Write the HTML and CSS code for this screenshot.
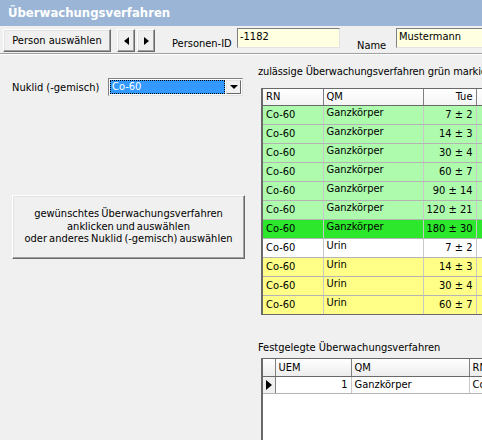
FILE: index.html
```html
<!DOCTYPE html>
<html lang="de">
<head>
<meta charset="utf-8">
<title>Überwachungsverfahren</title>
<link rel="stylesheet" href="styles.css">
</head>
<body>
<div class="titlebar">Überwachungsverfahren</div>
<div class="toolbar">
  <div class="btn btn-person">Person auswählen</div>
  <div class="nav">
    <div class="btn btn-nav"><span class="tri tri-left"></span></div>
    <div class="btn btn-nav"><span class="tri tri-right"></span></div>
  </div>
  <div class="lbl lbl-id">Personen-ID</div>
  <div class="field field-id">-1182</div>
  <div class="lbl lbl-name">Name</div>
  <div class="field field-name">Mustermann</div>
</div>
<div class="main">
  <div class="left">
    <div class="nuk">
      <span class="nuk-label">Nuklid (-gemisch)</span>
      <div class="combo">
        <div class="combo-val"><span>Co-60</span></div>
        <div class="combo-btn"><span class="tri tri-down"></span></div>
      </div>
    </div>
    <div class="btn btn-big">gewünschtes Überwachungsverfahren<br>anklicken und auswählen<br>oder anderes Nuklid (-gemisch) auswählen</div>
  </div>
  <div class="right">
    <div class="cap cap1">zulässige Überwachungsverfahren grün markiert</div>
    <div class="grid grid1">
      <table>
        <colgroup><col class="c-rn"><col class="c-qm"><col class="c-tue"><col class="c-x"></colgroup>
        <thead><tr><th>RN</th><th>QM</th><th class="r">Tue</th><th></th></tr></thead>
        <tbody>
          <tr class="g"><td>Co-60</td><td>Ganzkörper</td><td class="r">7 ± 2</td><td></td></tr>
          <tr class="g"><td>Co-60</td><td>Ganzkörper</td><td class="r">14 ± 3</td><td></td></tr>
          <tr class="g"><td>Co-60</td><td>Ganzkörper</td><td class="r">30 ± 4</td><td></td></tr>
          <tr class="g"><td>Co-60</td><td>Ganzkörper</td><td class="r">60 ± 7</td><td></td></tr>
          <tr class="g"><td>Co-60</td><td>Ganzkörper</td><td class="r">90 ± 14</td><td></td></tr>
          <tr class="g"><td>Co-60</td><td>Ganzkörper</td><td class="r">120 ± 21</td><td></td></tr>
          <tr class="gg"><td>Co-60</td><td>Ganzkörper</td><td class="r">180 ± 30</td><td></td></tr>
          <tr class="w"><td>Co-60</td><td>Urin</td><td class="r">7 ± 2</td><td></td></tr>
          <tr class="y"><td>Co-60</td><td>Urin</td><td class="r">14 ± 3</td><td></td></tr>
          <tr class="y"><td>Co-60</td><td>Urin</td><td class="r">30 ± 4</td><td></td></tr>
          <tr class="y"><td>Co-60</td><td>Urin</td><td class="r">60 ± 7</td><td></td></tr>
        </tbody>
      </table>
    </div>
    <div class="cap cap2">Festgelegte Überwachungsverfahren</div>
    <div class="grid grid2">
      <table>
        <colgroup><col class="c-sel"><col class="c-uem"><col class="c-qm2"><col class="c-rn2"></colgroup>
        <thead><tr><th></th><th>UEM</th><th>QM</th><th>RN</th></tr></thead>
        <tbody>
          <tr><td class="sel"><span class="tri tri-right"></span></td><td class="r">1</td><td>Ganzkörper</td><td>Co-60</td></tr>
        </tbody>
      </table>
    </div>
  </div>
</div>
</body>
</html>
```
FILE: styles.css
```css
html, body {
  margin: 0;
  padding: 0;
}
body {
  width: 482px;
  height: 440px;
  overflow: hidden;
  background: #f0f0f0;
  font-family: "DejaVu Sans Condensed", "DejaVu Sans", sans-serif;
  font-stretch: condensed;
  font-size: 11px;
  color: #000;
}

.titlebar {
  height: 26px;
  line-height: 26px;
  background: #9bb5d6;
  color: #fff;
  font-weight: bold;
  font-size: 13px;
  padding-left: 8px;
  box-sizing: border-box;
  white-space: nowrap;
}

.toolbar {
  height: 28px;
  box-sizing: border-box;
  display: flex;
  align-items: flex-start;
  padding-top: 3px;
  border-bottom: 1px solid #a0a0a0;
  box-shadow: 0 1px 0 #fff;
  white-space: nowrap;
}
.toolbar > * {
  flex: none;
}

.btn {
  box-sizing: border-box;
  background: #f0f0f0;
  border: 1px solid;
  border-color: #ffffff #696969 #696969 #ffffff;
  box-shadow: inset -1px -1px 0 #a0a0a0, inset 1px 1px 0 #e3e3e3;
  display: flex;
  align-items: center;
  justify-content: center;
}

.btn-person {
  margin-left: 3px;
  width: 108px;
  height: 23px;
}

.nav {
  display: flex;
  gap: 2px;
  margin-left: 6px;
}
.btn-nav {
  width: 18px;
  height: 23px;
}

.tri {
  display: inline-block;
  width: 0;
  height: 0;
}
.tri-left {
  border-top: 4px solid transparent;
  border-bottom: 4px solid transparent;
  border-right: 5px solid #000;
}
.tri-right {
  border-top: 4px solid transparent;
  border-bottom: 4px solid transparent;
  border-left: 5px solid #000;
}
.tri-down {
  border-left: 4px solid transparent;
  border-right: 4px solid transparent;
  border-top: 4px solid #000;
}

.lbl {
  line-height: 13px;
}
.lbl-id {
  margin-left: 17px;
  margin-top: 8px;
  width: 65px;
}
.lbl-name {
  margin-left: 17px;
  margin-top: 10px;
  width: 39px;
}

.field {
  box-sizing: border-box;
  height: 20px;
  margin-top: -1px;
  background: #ffffe1;
  border: 1px solid;
  border-color: #808080 #e3e3e3 #e3e3e3 #808080;
  padding: 1px 2px;
  line-height: 13px;
}
.field-id {
  width: 103px;
}
.field-name {
  width: 100px;
}

.main {
  display: flex;
}

.left {
  width: 258px;
  flex: none;
  box-sizing: border-box;
  padding: 24px 0 0 12px;
}

.nuk {
  display: flex;
  align-items: center;
  height: 18px;
}
.nuk-label {
  width: 96px;
  flex: none;
}
.combo {
  box-sizing: border-box;
  width: 135px;
  height: 18px;
  display: flex;
  background: #fff;
  border: 1px solid;
  border-color: #808080 #e3e3e3 #e3e3e3 #808080;
  padding: 1px;
}
.combo-val {
  flex: 1;
  background: #3399ff;
  color: #fff;
  border: 1px dotted #000;
  line-height: 12px;
  padding-left: 1px;
  margin-right: 1px;
}
.combo-btn {
  box-sizing: border-box;
  width: 15px;
  background: #f0f0f0;
  border: 1px solid;
  border-color: #e3e3e3 #696969 #696969 #e3e3e3;
  display: flex;
  align-items: center;
  justify-content: center;
}

.btn-big {
  margin-top: 99px;
  width: 233px;
  height: 64px;
  flex-direction: column;
  text-align: center;
  line-height: 12.5px;
  word-spacing: -1px;
}

.right {
  flex: none;
  width: 300px;
  padding-top: 12px;
}

.cap {
  line-height: 12px;
  height: 12px;
  white-space: nowrap;
}
.cap1 {
  letter-spacing: -0.12px;
}
.cap2 {
  margin-top: 27px;
}

.grid {
  margin-top: 10px;
  margin-left: 3px;
  border: 1px solid #696969;
  border-left-width: 2px;
  border-right: none;
  box-sizing: border-box;
  overflow: hidden;
}
.grid1 {
  height: 227px;
  background: #fff;
}
.grid2 {
  margin-top: 4px;
  height: 90px;
  background: #fff;
}

table {
  border-collapse: collapse;
  table-layout: fixed;
  width: 280px;
}
th, td {
  padding: 0 3px;
  font-weight: normal;
  text-align: left;
  white-space: nowrap;
  overflow: hidden;
}
.r {
  text-align: right;
}

.grid1 th {
  height: 16px;
  background: linear-gradient(#ffffff, #f4f4f4);
  border-right: 1px solid #808080;
  border-bottom: 1px solid #696969;
  line-height: 16px;
}
.grid1 td {
  height: 18px;
  line-height: 18px;
  border-right: 1px solid #c8c8c8;
  border-bottom: 1px solid #b4b4b4;
}
.grid1 td:nth-child(2) {
  line-height: 14px;
  vertical-align: top;
}
.c-rn { width: 60px; }
.c-qm { width: 100px; }
.c-tue { width: 53px; }
.c-x { width: 67px; }

tr.g td { background: #aefbae; }
tr.gg td { background: #2ce72c; }
tr.w td { background: #ffffff; }
tr.y td { background: #ffff88; }

.grid2 th {
  height: 17px;
  background: linear-gradient(#ffffff, #ececec);
  border-right: 1px solid #808080;
  border-bottom: 1px solid #696969;
  line-height: 17px;
}
.grid2 td {
  height: 16px;
  line-height: 16px;
  border-right: 1px solid #c8c8c8;
  border-bottom: 1px solid #b4b4b4;
}
.grid2 td.sel {
  background: #f0f0f0;
  border-right: 1px solid #808080;
  padding: 0 0 0 3px;
}
.grid2 td.sel .tri-right {
  border-top-width: 5px;
  border-bottom-width: 5px;
  border-left-width: 6px;
  vertical-align: middle;
}
.c-sel { width: 12px; }
.c-uem { width: 76px; }
.c-qm2 { width: 118px; }
.c-rn2 { width: 74px; }
```
